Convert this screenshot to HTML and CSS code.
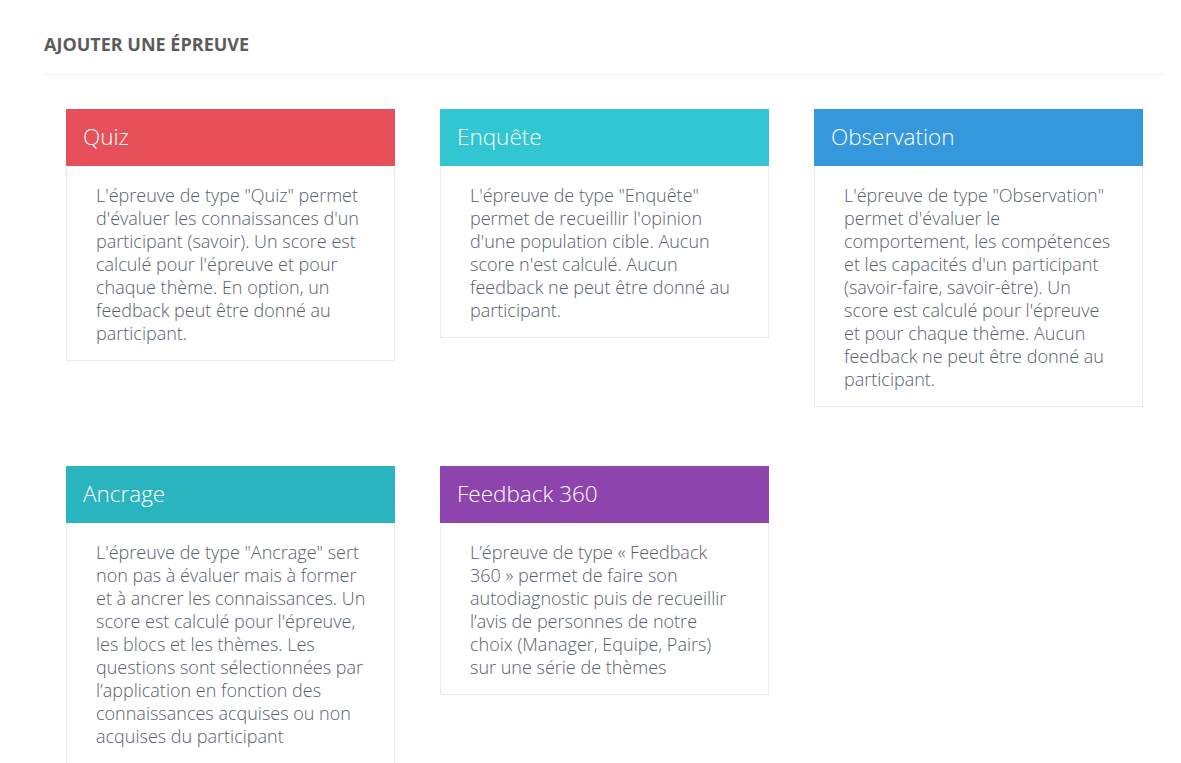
FILE: index.html
```html
<!DOCTYPE html>
<html lang="fr">
<head>
    <meta charset="UTF-8">
    <meta name="viewport" content="width=device-width, initial-scale=1.0">
    <title>Ajouter une épreuve</title>
    <link rel="stylesheet" href="styles.css">
</head>
<body>
    <div class="page">
        <h1 class="page-title">Ajouter une épreuve</h1>

        <div class="test-grid">
            <!-- Quiz -->
            <div class="test-card">
                <div class="test-card-head red">Quiz</div>
                <div class="test-card-body">
                    L'épreuve de type "Quiz" permet d'évaluer les connaissances d'un participant (savoir). Un score est calculé pour l'épreuve et pour chaque thème. En option, un feedback peut être donné au participant.
                </div>
            </div>

            <!-- Enquête -->
            <div class="test-card">
                <div class="test-card-head cyan">Enquête</div>
                <div class="test-card-body">
                    L'épreuve de type "Enquête" permet de recueillir l'opinion d'une population cible. Aucun score n'est calculé. Aucun feedback ne peut être donné au participant.
                </div>
            </div>

            <!-- Observation -->
            <div class="test-card">
                <div class="test-card-head blue">Observation</div>
                <div class="test-card-body">
                    L'épreuve de type "Observation" permet d'évaluer le comportement, les compétences et les capacités d'un participant (savoir-faire, savoir-être). Un score est calculé pour l'épreuve et pour chaque thème. Aucun feedback ne peut être donné au participant.
                </div>
            </div>

            <!-- Ancrage -->
            <div class="test-card">
                <div class="test-card-head teal">Ancrage</div>
                <div class="test-card-body">
                    L'épreuve de type "Ancrage" sert non pas à évaluer mais à former et à ancrer les connaissances. Un score est calculé pour l'épreuve, les blocs et les thèmes. Les questions sont sélectionnées par l’application en fonction des connaissances acquises ou non acquises du participant
                </div>
            </div>

            <!-- Feedback 360 -->
            <div class="test-card">
                <div class="test-card-head purple">Feedback 360</div>
                <div class="test-card-body">
                    L’épreuve de type « Feedback 360 » permet de faire son autodiagnostic puis de recueillir l’avis de personnes de notre choix (Manager, Equipe, Pairs) sur une série de thèmes
                </div>
            </div>
        </div>
    </div>
</body>
</html>
```

FILE: styles.css
```css
* {
    padding: 0px;
    margin: 0px;
    box-sizing: border-box;
}
body {
    background-color: #fff;
    font-family: "Open Sans", "Liberation Sans", sans-serif;
    color: #586070;
}

.page {
    padding: 0px 16px 0px 44px;
}
.page-title {
    font-size: 18px;
    line-height: 24px;
    font-weight: 700;
    color: #5c5c5c;
    text-transform: uppercase;
    padding: 32px 0px 18px;
    border-bottom: 1px solid #eef0f2;
}

/* GRID */
.test-grid {
    display: grid;
    grid-template-columns: repeat(3, 1fr);
    column-gap: 45px;
    row-gap: 59px;
    align-items: start;
    padding: 0px 22px;
    margin-top: 34px;
}

/* CARD */
.test-card-head {
    height: 57px;
    line-height: 55px;
    padding-left: 17px;
    font-size: 22.5px;
    font-weight: 300;
    color: #fff;
}
.test-card-head.red { background-color: #e7505a; }
.test-card-head.cyan { background-color: #32c5d2; }
.test-card-head.blue { background-color: #3598dc; }
.test-card-head.teal { background-color: #2ab4c0; }
.test-card-head.purple { background-color: #8e44ad; }

.test-card-body {
    border: 1px solid #e7ecf1;
    border-top: none;
    padding: 18px 27px 15px 29px;
    font-size: 18px;
    line-height: 23px;
    font-weight: 300;
}
```
